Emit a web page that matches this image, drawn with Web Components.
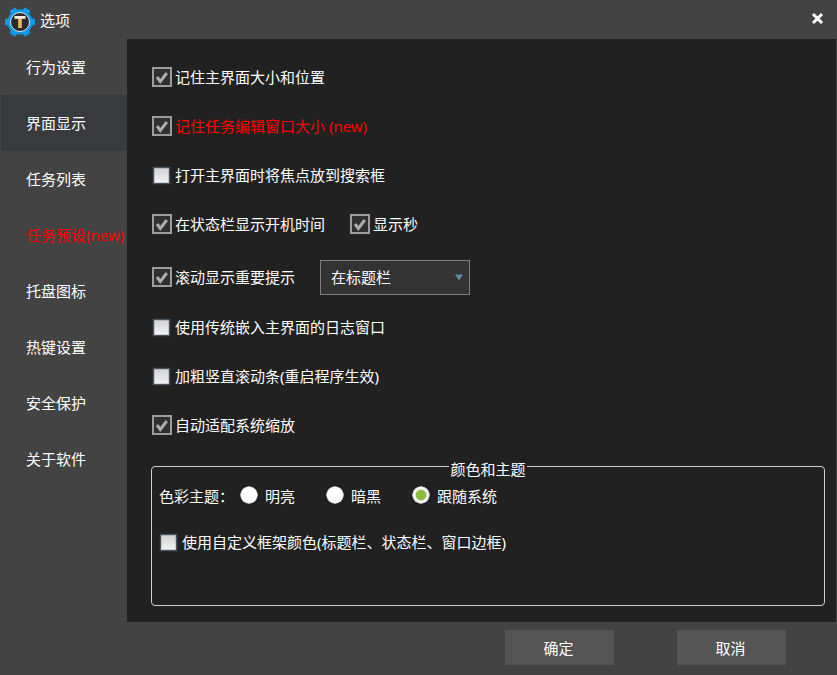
<!DOCTYPE html>
<html lang="zh">
<head>
<meta charset="utf-8">
<title>选项</title>
<style>
    html, body { margin: 0; height: 100%; background: #434343; }
    body {
        font-family: "Noto Sans", "Noto Sans CJK SC", sans-serif;
        font-size: 15px;
        color: #fff;
    }
</style>
</head>
<body>
<option-window>
    <nav-item slot="nav">行为设置</nav-item>
    <nav-item slot="nav" active>界面显示</nav-item>
    <nav-item slot="nav">任务列表</nav-item>
    <nav-item slot="nav" alert>任务预设(new)</nav-item>
    <nav-item slot="nav">托盘图标</nav-item>
    <nav-item slot="nav">热键设置</nav-item>
    <nav-item slot="nav">安全保护</nav-item>
    <nav-item slot="nav">关于软件</nav-item>

    <option-row><check-box checked>记住主界面大小和位置</check-box></option-row>
    <option-row><check-box checked alert>记住任务编辑窗口大小 (new)</check-box></option-row>
    <option-row><check-box>打开主界面时将焦点放到搜索框</check-box></option-row>
    <option-row>
        <check-box checked>在状态栏显示开机时间</check-box>
        <check-box checked style="margin-left:24px">显示秒</check-box>
    </option-row>
    <option-row style="margin-top:4px">
        <check-box checked>滚动显示重要提示</check-box>
        <drop-down style="margin-left:25px">在标题栏</drop-down>
    </option-row>
    <option-row style="margin-top:1px"><check-box>使用传统嵌入主界面的日志窗口</check-box></option-row>
    <option-row><check-box>加粗竖直滚动条(重启程序生效)</check-box></option-row>
    <option-row><check-box checked>自动适配系统缩放</check-box></option-row>

    <group-box title="颜色和主题">
        <theme-row>
            <span style="margin-right:6px">色彩主题：</span>
            <radio-dot>明亮</radio-dot>
            <radio-dot>暗黑</radio-dot>
            <radio-dot checked>跟随系统</radio-dot>
        </theme-row>
        <check-box style="margin:25px 0 0 6px">使用自定义框架颜色(标题栏、状态栏、窗口边框)</check-box>
    </group-box>

    <push-button slot="footer">确定</push-button>
    <push-button slot="footer">取消</push-button>
</option-window>

<template id="option-window-tpl">
    <style>
        :host { display: flex; flex-direction: column; width: 837px; height: 675px; background: #434343; overflow: hidden; }
        .title { height: 39px; flex: none; display: flex; align-items: center; padding-left: 5px; }
        .title svg.logo { width: 30px; height: 30px; flex: none; margin-top: 5px; }
        .title span { margin-left: 5px; margin-top: 1px; flex: 1; line-height: 20px; }
        .title svg.close { width: 13px; height: 13px; flex: none; margin-right: 13px; margin-top: -2px; }
        .middle { flex: 1; display: flex; min-height: 0; }
        nav { width: 127px; flex: none; display: flex; flex-direction: column; }
        main { flex: 1; background: #212121; margin-right: 1px; padding: 13px 11px 0 24px; box-sizing: border-box; display: flex; flex-direction: column; }
        footer { height: 53px; flex: none; display: flex; align-items: flex-start; padding: 8px 0 0 505px; box-sizing: border-box; gap: 63px; }
    </style>
    <div class="title">
        <svg class="logo" viewBox="0 0 30 30">
            <g fill="#0f9be8">
                <circle cx="15" cy="15" r="12.5"/>
                <rect x="0" y="11.5" width="30" height="7" rx="1"/>
                <rect x="0" y="11.5" width="30" height="7" rx="1" transform="rotate(60 15 15)"/>
                <rect x="0" y="11.5" width="30" height="7" rx="1" transform="rotate(120 15 15)"/>
            </g>
            <circle cx="15" cy="15" r="9.5" fill="#2b2b2b" stroke="#dfe8ee" stroke-width="1"/>
            <path fill="#f0b860" d="M13.2 11.5h3.6v9.5h-3.6z"/>
            <path fill="#f5efe0" d="M9.5 9h11v2.8h-11z"/>
        </svg>
        <span>选项</span>
        <svg class="close" viewBox="0 0 13 13"><path d="M2 2l9 9M11 2l-9 9" stroke="#fff" stroke-width="3"/></svg>
    </div>
    <div class="middle">
        <nav><slot name="nav"></slot></nav>
        <main><slot></slot></main>
    </div>
    <footer><slot name="footer"></slot></footer>
</template>

<template id="nav-item-tpl">
    <style>
        :host { display: flex; align-items: center; height: 56px; padding: 0 0 2px 26px; box-sizing: border-box; white-space: nowrap; color: #fff; }
        :host([active]) { background: #383a3e; margin-left: 1px; padding-left: 25px; }
        :host([alert]) { color: #ff0000; }
    </style>
    <slot></slot>
</template>

<template id="option-row-tpl">
    <style>
        :host { display: flex; align-items: center; height: 49px; flex: none; }
    </style>
    <slot></slot>
</template>

<template id="check-box-tpl">
    <style>
        :host { display: inline-flex; align-items: center; white-space: nowrap; color: #fff; line-height: 20px; }
        :host([alert]) { color: #ff0000; }
        .box { flex: none; box-sizing: border-box; width: 20px; height: 20px; margin: 0 3px 0 1px; display: block; }
    </style>
    <span id="mark" class="box"></span><slot></slot>
</template>

<template id="drop-down-tpl">
    <style>
        :host { display: flex; align-items: center; width: 150px; height: 35px; box-sizing: border-box; border: 1px solid #7f7f7f; background: #333; padding: 0 6px 2px 10px; margin-top: 2px; }
        span { flex: 1; }
        svg { width: 8px; height: 8px; flex: none; }
    </style>
    <span><slot></slot></span>
    <svg viewBox="0 0 8 8"><path d="M0 1.5h8L4 7.5z" fill="#5f8fa8"/></svg>
</template>

<template id="group-box-tpl">
    <style>
        :host { display: block; box-sizing: border-box; height: 140px; flex: none; margin-top: 17px; border: 1px solid #d0d0d0; border-radius: 4px; }
        .legend { display: table; margin: -8px auto 0; background: #212121; line-height: 20px; padding: 0 1px; }
        .body { padding-top: 4px; }
    </style>
    <div class="legend" id="legend"></div>
    <div class="body"><slot></slot></div>
</template>

<template id="theme-row-tpl">
    <style>
        :host { display: flex; align-items: center; height: 24px; padding-left: 7px; white-space: nowrap; }
    </style>
    <slot></slot>
</template>

<template id="radio-dot-tpl">
    <style>
        :host { display: inline-flex; align-items: center; margin-right: 31px; white-space: nowrap; }
        i { display: block; width: 18px; height: 18px; border-radius: 50%; margin-right: 7px; flex: none;
            background: radial-gradient(circle, #fff 0 7.5px, #bdbdbd 8.5px, transparent 9px); }
        :host([checked]) i { background: radial-gradient(circle, #8db93e 0 4.8px, #f4f4f4 5.8px 7.5px, #bdbdbd 8.5px, transparent 9px); }
    </style>
    <i></i><slot></slot>
</template>

<template id="push-button-tpl">
    <style>
        :host { display: flex; align-items: center; justify-content: center; width: 109px; height: 35px; padding-right: 2px; box-sizing: border-box; background: #545454; color: #fff; }
    </style>
    <slot></slot>
</template>

<script>
    // every element here only clones its template, check-box and group-box add a little on top
    function plainElement(name) {
        const tpl = document.getElementById(name + '-tpl');
        class Plain extends HTMLElement {
            constructor() {
                super();
                this.attachShadow({ mode: 'open' }).appendChild(tpl.content.cloneNode(true));
            }
        }
        return Plain;
    }

    const CHECKED_BOX = `
        <svg width="20" height="20" viewBox="0 0 20 20" style="display:block">
            <rect x="1" y="1" width="18" height="18" fill="#303030" stroke="#9c9c9c" stroke-width="2"/>
            <path d="M5 10l3.3 4.4L14.8 6" fill="none" stroke="#acacac" stroke-width="3"/>
        </svg>`;
    const EMPTY_BOX = `
        <svg width="20" height="20" viewBox="0 0 20 20" style="display:block">
            <defs><linearGradient id="g" x1="0" y1="0" x2="0" y2="1">
                <stop offset="0" stop-color="#d0d0d0"/><stop offset="1" stop-color="#f4f4f4"/>
            </linearGradient></defs>
            <rect x="1.5" y="2.5" width="16" height="16" fill="url(#g)" stroke="#46535f" stroke-width="1.4"/>
        </svg>`;

    class CheckBox extends plainElement('check-box') {
        connectedCallback() {
            this.shadowRoot.getElementById('mark').innerHTML =
                this.hasAttribute('checked') ? CHECKED_BOX : EMPTY_BOX;
        }
    }

    class GroupBox extends plainElement('group-box') {
        connectedCallback() {
            this.shadowRoot.getElementById('legend').textContent = this.getAttribute('title');
        }
    }

    customElements.define('option-window', plainElement('option-window'));
    customElements.define('nav-item', plainElement('nav-item'));
    customElements.define('option-row', plainElement('option-row'));
    customElements.define('check-box', CheckBox);
    customElements.define('drop-down', plainElement('drop-down'));
    customElements.define('group-box', GroupBox);
    customElements.define('theme-row', plainElement('theme-row'));
    customElements.define('radio-dot', plainElement('radio-dot'));
    customElements.define('push-button', plainElement('push-button'));
</script>
</body>
</html>
